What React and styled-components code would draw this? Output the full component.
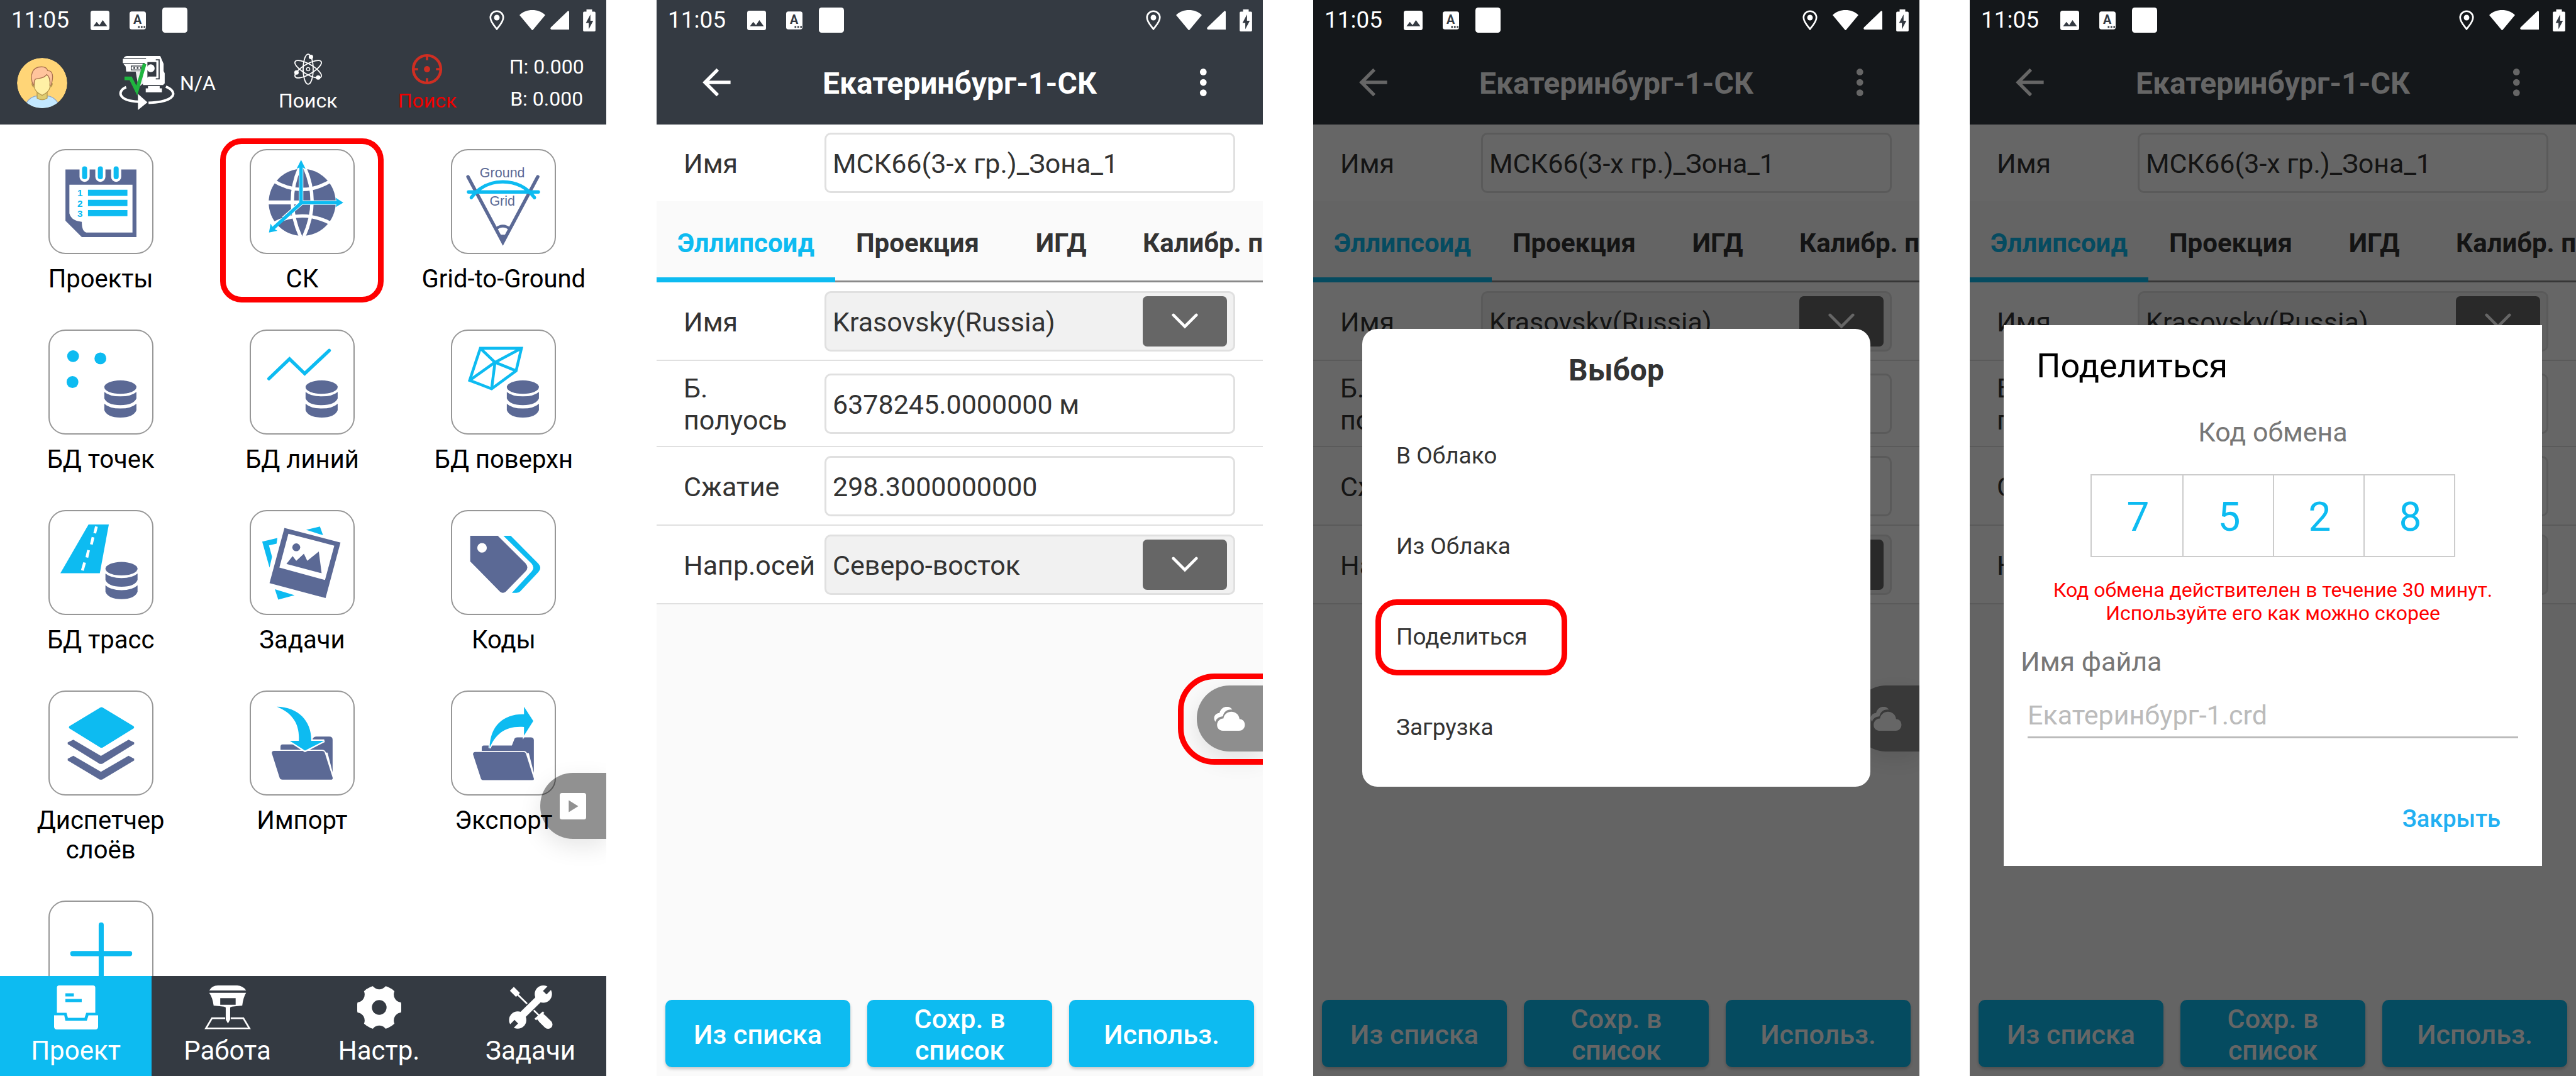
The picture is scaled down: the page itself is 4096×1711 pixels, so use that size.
import React, { useId } from 'react'
import styled, { createGlobalStyle, ThemeProvider } from 'styled-components'

const theme = {
  colors: {
    bar: '#343a42',
    blue: '#0dbbf1',
    indigo: '#5b6995',
    text: '#333333',
    muted: '#777777',
    line: '#e0e0e0',
    page: '#fafafa',
    mark: '#ff0000',
  },
}
const { bar, blue, indigo } = theme.colors

const GlobalStyle = createGlobalStyle`
  * {
    box-sizing: border-box;
  }
  body {
    margin: 0;
    background-color: #ffffff;
    font-family: Roboto, 'Liberation Sans', sans-serif;
  }
  button, input, select {
    margin: 0;
    padding: 0;
    border: none;
    background: none;
    color: inherit;
    font: inherit;
  }
  svg {
    display: block;
    flex: none;
  }
`

/* Screens */

const Board = styled.div`
  display: grid;
  grid-template-columns: repeat(4, minmax(0, 1fr));
  gap: 80px;
`
const Screen = styled.section`
  position: relative;
  display: flex;
  flex-direction: column;
  height: 100vh;
  overflow: hidden;
  background-color: ${(props) => (props.$plain ? '#ffffff' : props.theme.colors.page)};
`

/* Status bar */

const StatusWrapper = styled.div`
  position: relative;
  z-index: 3;
  display: flex;
  align-items: center;
  height: 64px;
  padding: 0 17px 0 18px;
  color: #ffffff;
`
const StatusShade = styled.div`
  background-color: ${(props) => props.theme.colors.bar};
`
const Time = styled.span`
  font-size: 37px;
  line-height: 64px;
`
const StatusIcon = styled.svg`
  width: ${(props) => props.$width}px;
  height: ${(props) => props.$height}px;
  margin-left: ${(props) => props.$gap}px;
`
const Spacer = styled.span`
  flex: 1;
`

function StatusBar() {
  return (
    <StatusShade>
      <StatusWrapper>
        <Time>11:05</Time>
        <StatusIcon $width={30} $height={31} $gap={34} viewBox="0 0 34 35">
          <rect width="34" height="35" rx="4" fill="#fff" />
          <path d="M5 28 11 20 16 26 22 17 30 28z" fill={bar} />
        </StatusIcon>
        <StatusIcon $width={26} $height={29} $gap={32} viewBox="0 0 29 32">
          <rect width="29" height="32" rx="4" fill="#fff" />
          <text
            x="14"
            y="22"
            fontSize="22"
            fontWeight="700"
            fontFamily="Roboto, sans-serif"
            textAnchor="middle"
            fill={bar}
          >
            A
          </text>
          <path d="M15 26h3v3h-3zM20 26h3v3h-3zM25 26h3v3h-3z" fill={bar} />
        </StatusIcon>
        <StatusIcon $width={40} $height={40} $gap={26} viewBox="0 0 45 45">
          <rect width="45" height="45" rx="5" fill="#fff" />
        </StatusIcon>
        <Spacer />
        <StatusIcon $width={24} $height={32} $gap={0} viewBox="0 0 27 36">
          <path
            d="M13.500 2C7 2 2 7 2 13.500 2 21 9 28 13.500 34 18 28 25 21 25 13.500 25 7 20 2 13.500 2z"
            fill="none"
            stroke="#fff"
            strokeWidth="3"
          />
          <circle cx="13.500" cy="13.500" r="5" fill="#fff" />
        </StatusIcon>
        <StatusIcon $width={41} $height={32} $gap={24} viewBox="0 0 46 36">
          <path d="M0 9C12-3 34-3 46 9L24.500 35Q23 37 21.500 35z" fill="#fff" />
        </StatusIcon>
        <StatusIcon $width={30} $height={30} $gap={8} viewBox="0 0 34 34">
          <path d="M34 2V34H2Q-1 33 1 30L31 1Q33-1 34 2z" fill="#fff" />
        </StatusIcon>
        <StatusIcon $width={20} $height={35} $gap={22} viewBox="0 0 22 39">
          <path d="M6 0h10v4h4q2 0 2 2v31q0 2-2 2H2q-2 0-2-2V6q0-2 2-2h4z" fill="#fff" />
          <path d="M13 9 5 24h5v11l8-15h-5z" fill={bar} />
        </StatusIcon>
      </StatusWrapper>
    </StatusShade>
  )
}

/* Home header */

const HomeHeader = styled.header`
  display: grid;
  grid-template-columns: 188px 207px repeat(3, 1fr);
  align-items: center;
  height: 134px;
  padding-top: 2px;
  color: #ffffff;
  background-color: ${(props) => props.theme.colors.bar};
  font-size: 32px;
`
const AvatarButton = styled.button`
  padding-left: 27px;
`
const Device = styled.button`
  display: flex;
  align-items: center;
  gap: 7px;
`
const Search = styled.button`
  display: flex;
  flex-direction: column;
  align-items: center;
  gap: 6px;
  line-height: 38px;
  color: ${(props) => (props.$alert ? '#f00000' : '#ffffff')};
`
const Values = styled.div`
  line-height: 51px;
  text-align: center;
`

function Avatar() {
  return (
    <svg width="80" height="80" viewBox="0 0 90 90">
      <clipPath id="avatar-clip">
        <circle cx="45" cy="45" r="45" />
      </clipPath>
      <g clipPath="url(#avatar-clip)" strokeWidth="1.500">
        <circle cx="45" cy="45" r="45" fill="#ffd577" />
        <path d="M16 82Q24 68 38 68H52Q66 68 74 82V92H16z" fill="#c3e8ff" stroke="#8fa7c7" />
        <path d="M36 60V72Q45 78 54 72V60z" fill="#dfcc70" stroke="#b5984f" />
        <path d="M30 45q-4-1-3 3 1 4 5 5zM60 45q4-1 3 3-1 4-5 5z" fill="#dfcc70" stroke="#b5984f" />
        <path d="M31 34V52Q32 61 45 67 58 61 59 52V34L52 28z" fill="#fff0a5" stroke="#b5984f" />
        <path
          d="M29 49C22 31 27 16 44 16 50 16 54 19 55 23 64 23 66 32 61 49H59C60 42 58 33 53 30 48 38 38 36 33 38 30 41 31 46 30 49z"
          fill="#ffc49c"
          stroke="#a9714f"
        />
      </g>
    </svg>
  )
}

function Instrument() {
  return (
    <svg width="91" height="87" viewBox="0 0 102 98">
      <path d="M16 0H54V28H14L13 19 8 13V6Q11 0 16 0z" fill="#fff" />
      <path d="M9 5H50M8 13H50" stroke={bar} strokeWidth="1.500" />
      <rect x="23" y="18" width="22" height="7" fill="#fff" stroke={bar} strokeWidth="1.500" />
      <path d="M27 20h3v3h-3zM33 20h3v3h-3zM39 20h3v3h-3z" fill={bar} />
      <path d="M31 28H46V48L36 56z" fill="#eee" />
      <path d="M54 0H75L81 14V27L83 31V49L80 52H44V40L48 9Q50 2 54 0z" fill="#fff" />
      <path d="M52 11H68V37H54L52 39z" fill={bar} />
      <circle cx="58" cy="22" r="7" fill="#fff" />
      <path d="M67 7H73V41H67" fill="none" stroke={bar} strokeWidth="2" />
      <path d="M53 54H74V58H78V65H49V58H53z" fill="#fff" />
      <path d="M11 40H22L33 62 47 14" fill="none" stroke="#1fb53f" strokeWidth="6.500" />
      <path
        d="M14 56C-2 62-2 80 36 82M85 55C106 63 106 82 54 84"
        fill="none"
        stroke="#fff"
        strokeWidth="4.500"
      />
      <path d="M35 68 52 83 35 97z" fill="#fff" />
    </svg>
  )
}

function Atom() {
  return (
    <svg width="46" height="50" viewBox="0 0 52 56">
      <g fill="none" stroke="#fff" strokeWidth="2">
        {[0, 60, 120].map((angle) => (
          <ellipse key={angle} cx="26" cy="28" rx="9" ry="27" transform={`rotate(${angle} 26 28)`} />
        ))}
      </g>
      <circle cx="26" cy="28" r="3" fill="none" stroke="#fff" strokeWidth="1.500" />
      <circle cx="31" cy="6" r="4" fill="#fff" />
      <circle cx="5" cy="34" r="4" fill="#fff" />
      <circle cx="44" cy="43" r="4" fill="#fff" />
    </svg>
  )
}

function Target() {
  return (
    <svg width="50" height="50" viewBox="0 0 56 56">
      <circle cx="28" cy="28" r="24.500" fill="none" stroke="#cf2e22" strokeWidth="5" />
      <circle cx="28" cy="28" r="5.500" fill="#cf2e22" />
      <path d="M28 3V12M28 44V53M3 28H12M44 28H53" stroke="#cf2e22" strokeWidth="4" />
    </svg>
  )
}

/* Tiles */

const Tiles = styled.main`
  position: relative;
  flex: 1;
  display: grid;
  grid-template-columns: repeat(3, 1fr);
  grid-auto-rows: max-content;
  row-gap: 57px;
  min-height: 0;
  padding: 39px 3px 0 0;
  overflow: hidden;
`
const TileButton = styled.button`
  position: relative;
  display: flex;
  flex-direction: column;
  align-items: center;
  gap: 16px;
  font-size: 40px;
  line-height: 47px;
  color: #000000;
`
const TileBox = styled.span`
  width: 167px;
  height: 167px;
  border: 2px solid #979797;
  border-radius: 27px;
  background-color: #ffffff;
`
const TileLabel = styled.span`
  max-width: 280px;
`
const TileMark = styled.span`
  position: absolute;
  top: -17px;
  left: calc(50% - 130px);
  width: 260px;
  height: 261px;
  border: 9px solid ${(props) => props.theme.colors.mark};
  border-radius: 34px;
`

function Database({ shift = 0 }) {
  return (
    <g fill={indigo} transform={`translate(${shift} ${shift})`}>
      <ellipse cx="127.500" cy="102" rx="28.500" ry="12" />
      <path d="M99 110.500Q108 118.500 127.500 118.500T156 110.500V122Q151 134 127.500 134T99 122z" />
      <path d="M99 131.500Q108 140 127.500 140T156 131.500V143Q151 156 127.500 156T99 143z" />
    </g>
  )
}

const drawings = {
  projects: (
    <>
      <path d="M30 36H156V156H59L30 127z" fill={indigo} />
      <path d="M37 63H149V148H67Q59 146 59 129 40 127 37 114z" fill="#fff" />
      {[64, 92, 120].map((x) => (
        <React.Fragment key={x}>
          <path d={`M${x} 34V49`} stroke="#fff" strokeWidth="18" strokeLinecap="round" />
          <path d={`M${x} 35V49`} stroke={blue} strokeWidth="9" strokeLinecap="round" />
        </React.Fragment>
      ))}
      <path d="M70 72H140V83H70zM70 90H140V101H70zM70 108H140V119H70z" fill={blue} />
      <g fontFamily="Liberation Sans, sans-serif" fontWeight="700" fontSize="17" fill={blue}>
        <text x="51" y="84">1</text>
        <text x="51" y="102">2</text>
        <text x="51" y="120">3</text>
      </g>
    </>
  ),
  globe: (
    <>
      <circle cx="93" cy="94.500" r="59.500" fill={indigo} />
      <g fill="none" stroke="#fff" strokeWidth="6">
        <path d="M33 94.500H153" strokeWidth="7" />
        <path d="M88 34Q62 94 90 155M98 34Q124 94 96 155" />
        <path d="M40 55Q93 88 146 55M40 133Q93 104 146 133" />
      </g>
      <path d="M91 30V96M91 95H156M92 95L60 123" fill="none" stroke="#fff" strokeWidth="8" />
      <path d="M91 28V95H156M92 95L41 141" fill="none" stroke={blue} strokeWidth="6" />
      <path d="M91 19 99 35 91 31 83 35zM166 95 152 103 155 95 152 86zM34 148 37 132 41 140 49 145z" fill={blue} />
    </>
  ),
  gridToGround: (
    <>
      <path d="M30 49 92 165 154 49" fill="none" stroke={indigo} strokeWidth="6" strokeLinecap="round" />
      <path d="M79 142Q92 131 105 142" fill="none" stroke={indigo} strokeWidth="5" />
      <path d="M83 152H101L92 171z" fill={indigo} />
      <path
        d="M31 76H155M36 86Q57 58 92 58T148 86"
        fill="none"
        stroke={blue}
        strokeWidth="6"
        strokeLinecap="round"
      />
      <g fontFamily="Liberation Sans, sans-serif" fontSize="24" textAnchor="middle" fill={indigo}>
        <text x="91" y="50">Ground</text>
        <text x="91" y="100">Grid</text>
      </g>
    </>
  ),
  points: (
    <>
      <circle cx="43.500" cy="47" r="10.500" fill={blue} />
      <circle cx="92" cy="51" r="10.500" fill={blue} />
      <circle cx="42.500" cy="93" r="10.500" fill={blue} />
      <Database />
    </>
  ),
  lines: (
    <>
      <path d="M34 87 70.500 52 97.500 78 141 37" fill="none" stroke={blue} strokeWidth="6" strokeLinecap="round" />
      <Database />
    </>
  ),
  surfaces: (
    <>
      <path
        d="M52 33H125L115.500 73 72 105 33 90zM52 33 78 58 125 33M33 90 78 58 115.500 73M78 58 72 105"
        fill="none"
        stroke={blue}
        strokeWidth="5"
      />
      <Database />
    </>
  ),
  routes: (
    <>
      <path d="M71 25.500H107L91 112H21z" fill={blue} />
      <path d="M85 29 82 41M79 48 76 61M71 71 68 84M64 93 60 107" stroke="#fff" strokeWidth="5" />
      <Database shift={2} />
    </>
  ),
  photos: (
    <>
      <path
        d="M61.500 31.500 161 57.500 134.500 156 35 129.500zM68.500 42 52.500 102 133.500 124 150 63z"
        fill={indigo}
        fillRule="evenodd"
      />
      <circle cx="82.500" cy="66" r="7" fill={indigo} />
      <path d="M65 95.500 76 81.500 82.500 90 96 77.500 102 90 122.500 73.500 127.500 112z" fill={indigo} />
      <path
        d="M22 56 49 49.500 47.500 59.500 34 62.500 39.500 83 35 102zM100 35 124.500 29 130 44.500zM44.500 140.500 79.500 151 50.500 159z"
        fill={blue}
      />
    </>
  ),
  tag: (
    <>
      <path
        d="M34 45.500H83L132 94Q139 102 132 109L97 145Q92 149 87 145L34 91zM55 58.500a8.500 8.500 0 1 0 0 17 8.500 8.500 0 1 0 0-17z"
        fill={indigo}
        fillRule="evenodd"
      />
      <path d="M93 45.500H106L155 95Q162 103 155 110L123 144Q120 147 116 147H108L143 109Q149 102 143 95z" fill={blue} />
    </>
  ),
  layers: (
    <>
      <path d="M92 30Q94 28.500 96 30L151 63Q153 65 151 67L96 101Q94 102 92 101L37 67Q35 65 37 63z" fill={blue} />
      <path
        d="M44 87 93 116 142 87 152 92V95L95 130H91L34 95V92zM44 115.500 93 144 142 115.500 152 121V124L95 158H91L34 124V121z"
        fill={indigo}
      />
    </>
  ),
  importFolder: (
    <>
      <path d="M54.500 110V99Q55 95.500 58 95.500H105L112 85Q114 81.500 118 81.500H141Q147 81.500 147 87V145L138 110z" fill={indigo} />
      <path
        d="M39 111Q39 107 43 107H128Q132 107 133 110L147 154Q148 158 144 158H58Q54 158 53 155z"
        fill={indigo}
        stroke="#fff"
        strokeWidth="4"
        paintOrder="stroke"
      />
      <path
        d="M48 28.500C87 29 110 55 109 89H132L98 106.500 71 89H87C89 61 77 40 48 28.500z"
        fill={blue}
        stroke="#fff"
        strokeWidth="5"
        paintOrder="stroke"
      />
    </>
  ),
  exportFolder: (
    <>
      <path d="M54.500 111V101Q55 97.500 58 97.500H108L112 87Q113 83 118 83H141Q147 83 147 88V146L138 111z" fill={indigo} />
      <path
        d="M39 113Q39 109 43 109H128Q132 109 133 112L147 156Q148 159 144 159H58Q54 159 53 156z"
        fill={indigo}
        stroke="#fff"
        strokeWidth="4"
        paintOrder="stroke"
      />
      <path
        d="M68.500 102C69 62 94 41 129.500 42V28.500L146 54 129.500 80V64.500C98 62 79 76 68.500 102z"
        fill={blue}
        stroke="#fff"
        strokeWidth="4"
        paintOrder="stroke"
      />
    </>
  ),
  plus: (
    <path d="M43 94H144M93.500 43V144" fill="none" stroke={blue} strokeWidth="9" strokeLinecap="round" />
  ),
}

const tiles = [
  { icon: 'projects', label: 'Проекты' },
  { icon: 'globe', label: 'СК', marked: true },
  { icon: 'gridToGround', label: 'Grid-to-Ground' },
  { icon: 'points', label: 'БД точек' },
  { icon: 'lines', label: 'БД линий' },
  { icon: 'surfaces', label: 'БД поверхн' },
  { icon: 'routes', label: 'БД трасс' },
  { icon: 'photos', label: 'Задачи' },
  { icon: 'tag', label: 'Коды' },
  { icon: 'layers', label: 'Диспетчер слоёв' },
  { icon: 'importFolder', label: 'Импорт' },
  { icon: 'exportFolder', label: 'Экспорт' },
  { icon: 'plus', label: '' },
]

function Tile({ icon, label, marked }) {
  return (
    <TileButton aria-label={label || 'Добавить'}>
      <TileBox>
        <svg width="163" height="163" viewBox="2 2 182 182">
          {drawings[icon]}
        </svg>
      </TileBox>
      {label && <TileLabel>{label}</TileLabel>}
      {marked && <TileMark />}
    </TileButton>
  )
}

/* Floating tab on the right edge */

const FloatButton = styled.button`
  position: absolute;
  right: 0;
  top: ${(props) => props.$top}px;
  display: flex;
  align-items: center;
  width: 105px;
  height: 105px;
  padding-left: ${(props) => props.$inset}px;
  border-radius: 52px 0 0 52px;
  background-color: rgba(0, 0, 0, 0.43);
  box-shadow: 0 12px 36px rgba(0, 0, 0, 0.1);
`
const FloatMark = styled.span`
  position: absolute;
  right: -80px;
  top: 1071px;
  width: 215px;
  height: 145px;
  border: 9px solid ${(props) => props.theme.colors.mark};
  border-radius: 58px;
`

/* Bottom navigation */

const Nav = styled.nav`
  display: grid;
  grid-template-columns: repeat(4, 1fr);
  height: 159px;
  color: #ffffff;
  background-color: ${(props) => props.theme.colors.bar};
`
const NavButton = styled.button`
  display: flex;
  flex-direction: column;
  align-items: center;
  gap: 10px;
  padding-top: 15px;
  font-size: 42px;
  line-height: 48px;
  background-color: ${(props) => (props.$active ? props.theme.colors.blue : 'transparent')};
`

const navItems = [
  {
    label: 'Проект',
    icon: (
      <svg width="70" height="70" viewBox="0 0 78 78" fill="#fff">
        <path
          d="M9 0H69Q73 0 73 4V48.500H57L54 57.500H24.500L22 48.500H5V4Q5 0 9 0zM20 14V19.500H35V14zM20 24V29.500H49V24z"
          fillRule="evenodd"
        />
        <path d="M0 53H18L20 62.500H58L61 53H78V73Q78 78 73 78H5Q0 78 0 73z" />
      </svg>
    ),
  },
  {
    label: 'Работа',
    icon: (
      <svg width="74" height="70" viewBox="0 0 83 80" fill="#fff">
        <path d="M8 9Q13 0 24 0H59Q70 1 75 9z" />
        <path
          d="M8 13.500H75Q70 21 68 36.500L49 38.500 46 40V62L42 69 38 62V40L35 38.500 16 36.500Q14 22 8 13.500zM28 23V35H56V23z"
          fillRule="evenodd"
        />
        <path d="M37 59.500H13L2 78H81L70 59.500H47" fill="none" stroke="#fff" strokeWidth="3" />
      </svg>
    ),
  },
  {
    label: 'Настр.',
    icon: (
      <svg width="70" height="70" viewBox="0 0 78 78">
        <mask id="gear-mask">
          <circle cx="39" cy="39" r="39.500" fill="#fff" />
          <circle cx="39" cy="39" r="13" fill="#000" />
          {[0, 60, 120, 180, 240, 300].map((angle) => (
            <circle key={angle} cx="39" cy="-7" r="14" fill="#000" transform={`rotate(${angle} 39 39)`} />
          ))}
        </mask>
        <rect width="78" height="78" fill="#fff" mask="url(#gear-mask)" />
      </svg>
    ),
  },
  {
    label: 'Задачи',
    icon: (
      <svg width="70" height="70" viewBox="0 0 78 79" fill="none">
        <g stroke="#fff">
          <path d="M5 6 16 17" strokeWidth="10" />
          <path d="M14 15 56 56" strokeWidth="3" />
          <path d="M47 61 62 48" strokeWidth="4" />
          <path d="M54 54 60 60" strokeWidth="15" />
          <path d="M60 60 70 70" strokeWidth="16" strokeLinecap="round" />
        </g>
        <path d="M20 57 57 20" stroke={bar} strokeWidth="17" />
        <path d="M15 62 62 16" stroke="#fff" strokeWidth="13" />
        <circle cx="61.500" cy="15.500" r="15.500" fill="#fff" />
        <circle cx="15.500" cy="62" r="15.500" fill="#fff" />
        <path d="M64 13 80-3M13 65-3 81" stroke={bar} strokeWidth="9" />
      </svg>
    ),
  },
]

function HomeScreen() {
  return (
    <Screen $plain>
      <StatusBar />
      <HomeHeader>
        <AvatarButton aria-label="Профиль">
          <Avatar />
        </AvatarButton>
        <Device>
          <Instrument />
          N/A
        </Device>
        <Search>
          <Atom />
          Поиск
        </Search>
        <Search $alert>
          <Target />
          Поиск
        </Search>
        <Values>
          <div>П: 0.000</div>
          <div>В: 0.000</div>
        </Values>
      </HomeHeader>
      <Tiles>
        {tiles.map((tile) => (
          <Tile key={tile.icon} {...tile} />
        ))}
      </Tiles>
      <FloatButton $top={1229} $inset={31} aria-label="Панель">
        <svg width="42" height="42" viewBox="0 0 47 47">
          <path d="M4 0H43Q47 0 47 4V43Q47 47 43 47H4Q0 47 0 43V4Q0 0 4 0zM16 13V34L33 23.500z" fill="#fff" fillRule="evenodd" />
        </svg>
      </FloatButton>
      <Nav>
        {navItems.map((item, index) => (
          <NavButton key={item.label} $active={index === 0}>
            {item.icon}
            {item.label}
          </NavButton>
        ))}
      </Nav>
    </Screen>
  )
}

/* Coordinate system form */

const TitleBar = styled.header`
  display: grid;
  grid-template-columns: 118px 1fr 118px;
  align-items: center;
  height: 134px;
  color: #ffffff;
  background-color: ${(props) => props.theme.colors.bar};
`
const IconButton = styled.button`
  display: flex;
  justify-content: ${(props) => props.$align};
`
const Title = styled.h1`
  margin: 0;
  padding-top: 4px;
  font-size: 48px;
  font-weight: 700;
  line-height: 56px;
  text-align: center;
`
const Row = styled.div`
  display: grid;
  grid-template-columns: 224px 1fr;
  align-items: center;
  padding: ${(props) => (props.$last ? '13px 44px 13px 43px' : '14px 44px 13px 43px')};
  border-bottom: ${(props) => (props.$last ? 'none' : `2px solid ${props.theme.colors.line}`)};
  color: ${(props) => props.theme.colors.text};
  background-color: #ffffff;
  font-size: 43px;
  line-height: 51px;
`
const FieldLabel = styled.label`
  padding: 4px 40px 2px 0;
  white-space: ${(props) => (props.$wrap ? 'normal' : 'nowrap')};
`
const TextInput = styled.input`
  width: 100%;
  height: 96px;
  padding: 2px 10px 0;
  border: 3px solid ${(props) => props.theme.colors.line};
  border-radius: 10px;
  background-color: #ffffff;
`
const SelectWrapper = styled.div`
  position: relative;
`
const Select = styled.select`
  appearance: none;
  display: block;
  width: 100%;
  height: 96px;
  padding: 2px 150px 0 10px;
  border: 3px solid ${(props) => props.theme.colors.line};
  border-radius: 10px;
  background-color: #f1f1f1;
`
const Arrow = styled.span`
  position: absolute;
  top: 8px;
  right: 13px;
  display: flex;
  align-items: center;
  justify-content: center;
  width: 134px;
  height: 80px;
  border-radius: 7px;
  background-color: #666666;
  pointer-events: none;
`
const Tabs = styled.div`
  display: flex;
  height: 129px;
  overflow: hidden;
  box-shadow: inset 0 -3px #8a8a8a;
  color: ${(props) => props.theme.colors.text};
`
const Tab = styled.button`
  flex: none;
  min-width: 194px;
  padding: 4px 33px 0;
  font-size: 42px;
  font-weight: 700;
  color: ${(props) => (props.$active ? props.theme.colors.blue : 'inherit')};
  box-shadow: ${(props) => (props.$active ? `inset 0 -8px ${props.theme.colors.blue}` : 'none')};
`
const Body = styled.main`
  flex: 1;
`
const Actions = styled.footer`
  display: grid;
  grid-template-columns: repeat(3, 1fr);
  gap: 27px;
  padding: 0 14px 14px;
`
const Action = styled.button`
  height: 107px;
  padding: 3px 40px 0;
  border-radius: 10px;
  color: #ffffff;
  background-color: ${(props) => props.theme.colors.blue};
  box-shadow: 0 3px 5px rgba(0, 0, 0, 0.2);
  font-size: 43px;
  font-weight: 500;
  line-height: 50px;
`

function SelectField({ id, value }) {
  return (
    <SelectWrapper>
      <Select id={id} defaultValue={value}>
        <option>{value}</option>
      </Select>
      <Arrow>
        <svg width="42" height="26" viewBox="0 0 46 28">
          <path d="M3 3 23 23 43 3" fill="none" stroke="#fff" strokeWidth="5" strokeLinecap="round" />
        </svg>
      </Arrow>
    </SelectWrapper>
  )
}

function FormScreen({ cloud, marked, children }) {
  const id = useId()

  return (
    <Screen>
      <StatusBar />
      <TitleBar>
        <IconButton $align="flex-end" aria-label="Назад">
          <svg width="45" height="46" viewBox="0 0 50 52">
            <path d="M50 26H4M27 3 4 26 27 49" fill="none" stroke="#fff" strokeWidth="6" />
          </svg>
        </IconButton>
        <Title>Екатеринбург-1-СК</Title>
        <IconButton $align="flex-start" aria-label="Меню">
          <svg width="43" height="44" viewBox="0 0 48 49" fill="#fff">
            <circle cx="26" cy="6" r="6" />
            <circle cx="26" cy="24.500" r="6" />
            <circle cx="26" cy="43" r="6" />
          </svg>
        </IconButton>
      </TitleBar>
      <Row $last>
        <FieldLabel htmlFor={`${id}-name`}>Имя</FieldLabel>
        <TextInput id={`${id}-name`} defaultValue="МСК66(3-х гр.)_Зона_1" />
      </Row>
      <Tabs role="tablist">
        <Tab role="tab" aria-selected="true" $active>
          Эллипсоид
        </Tab>
        <Tab role="tab">Проекция</Tab>
        <Tab role="tab">ИГД</Tab>
        <Tab role="tab">Калибр. п</Tab>
      </Tabs>
      <Body>
        <Row>
          <FieldLabel htmlFor={`${id}-ellipsoid`}>Имя</FieldLabel>
          <SelectField id={`${id}-ellipsoid`} value="Krasovsky(Russia)" />
        </Row>
        <Row>
          <FieldLabel htmlFor={`${id}-axis`} $wrap>
            Б. полуось
          </FieldLabel>
          <TextInput id={`${id}-axis`} defaultValue="6378245.0000000 м" />
        </Row>
        <Row>
          <FieldLabel htmlFor={`${id}-flattening`}>Сжатие</FieldLabel>
          <TextInput id={`${id}-flattening`} defaultValue="298.3000000000" />
        </Row>
        <Row>
          <FieldLabel htmlFor={`${id}-direction`}>Напр.осей</FieldLabel>
          <SelectField id={`${id}-direction`} value="Северо-восток" />
        </Row>
      </Body>
      <Actions>
        <Action>Из списка</Action>
        <Action>Сохр. в список</Action>
        <Action>Использ.</Action>
      </Actions>
      {cloud && (
        <FloatButton $top={1090} $inset={27} aria-label="Облако">
          <svg width="50" height="38" viewBox="0 0 56 43" fill="#fff">
            <path d="M3 27C-3 20 2 11 10 11 13-1 27-4 33 5 23 4 18 9 16 17 9 18 4 21 3 27z" />
            <path d="M16 43C2 43 2 22 17 21 20 4 44 5 46 22 59 22 59 43 45 43z" />
          </svg>
        </FloatButton>
      )}
      {marked && <FloatMark />}
      {children}
    </Screen>
  )
}

/* Dialogs */

const Overlay = styled.div`
  position: absolute;
  inset: 0;
  z-index: 2;
  padding: ${(props) => props.$top}px ${(props) => props.$side}px 0;
  background-color: rgba(0, 0, 0, 0.6);
`
const Menu = styled.div`
  padding: 38px 0 22px;
  border-radius: 24px;
  color: ${(props) => props.theme.colors.text};
  background-color: #ffffff;
`
const MenuTitle = styled.h2`
  margin: 0 0 36px;
  font-size: 48px;
  font-weight: 700;
  line-height: 56px;
  text-align: center;
`
const MenuItem = styled.button`
  position: relative;
  display: block;
  width: 100%;
  padding-left: 54px;
  font-size: 37px;
  line-height: 144px;
  text-align: left;
`
const MenuMark = styled.span`
  position: absolute;
  top: 12px;
  left: 21px;
  width: 305px;
  height: 121px;
  border: 9px solid ${(props) => props.theme.colors.mark};
  border-radius: 34px;
`
const Share = styled.div`
  display: flex;
  flex-direction: column;
  padding: 36px 38px 49px;
  color: ${(props) => props.theme.colors.muted};
  background-color: #ffffff;
  font-size: 43px;
  line-height: 52px;
`
const ShareTitle = styled.h2`
  margin: 0 14px 50px;
  font-size: 54px;
  font-weight: 400;
  line-height: 58px;
  color: #000000;
`
const CodeLabel = styled.div`
  margin-bottom: 41px;
  text-align: center;
`
const Code = styled.div`
  display: grid;
  grid-template-columns: repeat(4, 1fr);
  align-self: center;
  border: 2px solid #cccccc;
`
const Digit = styled.span`
  width: 144px;
  height: 128px;
  padding: 3px 0 0 3px;
  border-left: ${(props) => (props.$first ? 'none' : '2px solid #cccccc')};
  font-size: 64px;
  line-height: 128px;
  text-align: center;
  color: ${(props) => props.theme.colors.blue};
`
const Warning = styled.p`
  margin: 34px 0 32px;
  font-size: 32px;
  line-height: 37px;
  text-align: center;
  color: ${(props) => props.theme.colors.mark};
`
const FileLabel = styled.label`
  margin: 0 0 27px -11px;
`
const FileInput = styled.input`
  width: 100%;
  height: 69px;
  padding-bottom: 2px;
  border-bottom: 3px solid #bbbbbb;

  &::placeholder {
    color: #bbbbbb;
    opacity: 1;
  }
`
const CloseButton = styled.button`
  align-self: flex-end;
  margin: 102px 28px 0 0;
  font-size: 38px;
  font-weight: 500;
  color: #22b0f2;
`

function ChoiceDialog() {
  return (
    <Overlay $top={523} $side={78}>
      <Menu role="dialog" aria-label="Выбор">
        <MenuTitle>Выбор</MenuTitle>
        <MenuItem>В Облако</MenuItem>
        <MenuItem>Из Облака</MenuItem>
        <MenuItem>
          Поделиться
          <MenuMark />
        </MenuItem>
        <MenuItem>Загрузка</MenuItem>
      </Menu>
    </Overlay>
  )
}

function ShareDialog() {
  const id = useId()

  return (
    <Overlay $top={517} $side={54}>
      <Share role="dialog" aria-label="Поделиться">
        <ShareTitle>Поделиться</ShareTitle>
        <CodeLabel>Код обмена</CodeLabel>
        <Code>
          {['7', '5', '2', '8'].map((digit, index) => (
            <Digit key={digit} $first={index === 0}>
              {digit}
            </Digit>
          ))}
        </Code>
        <Warning>
          Код обмена действителен в течение 30 минут.
          <br />
          Используйте его как можно скорее
        </Warning>
        <FileLabel htmlFor={id}>Имя файла</FileLabel>
        <FileInput id={id} placeholder="Екатеринбург-1.crd" />
        <CloseButton>Закрыть</CloseButton>
      </Share>
    </Overlay>
  )
}

export default function App() {
  return (
    <ThemeProvider theme={theme}>
      <GlobalStyle />
      <Board>
        <HomeScreen />
        <FormScreen cloud marked />
        <FormScreen cloud>
          <ChoiceDialog />
        </FormScreen>
        <FormScreen>
          <ShareDialog />
        </FormScreen>
      </Board>
    </ThemeProvider>
  )
}
